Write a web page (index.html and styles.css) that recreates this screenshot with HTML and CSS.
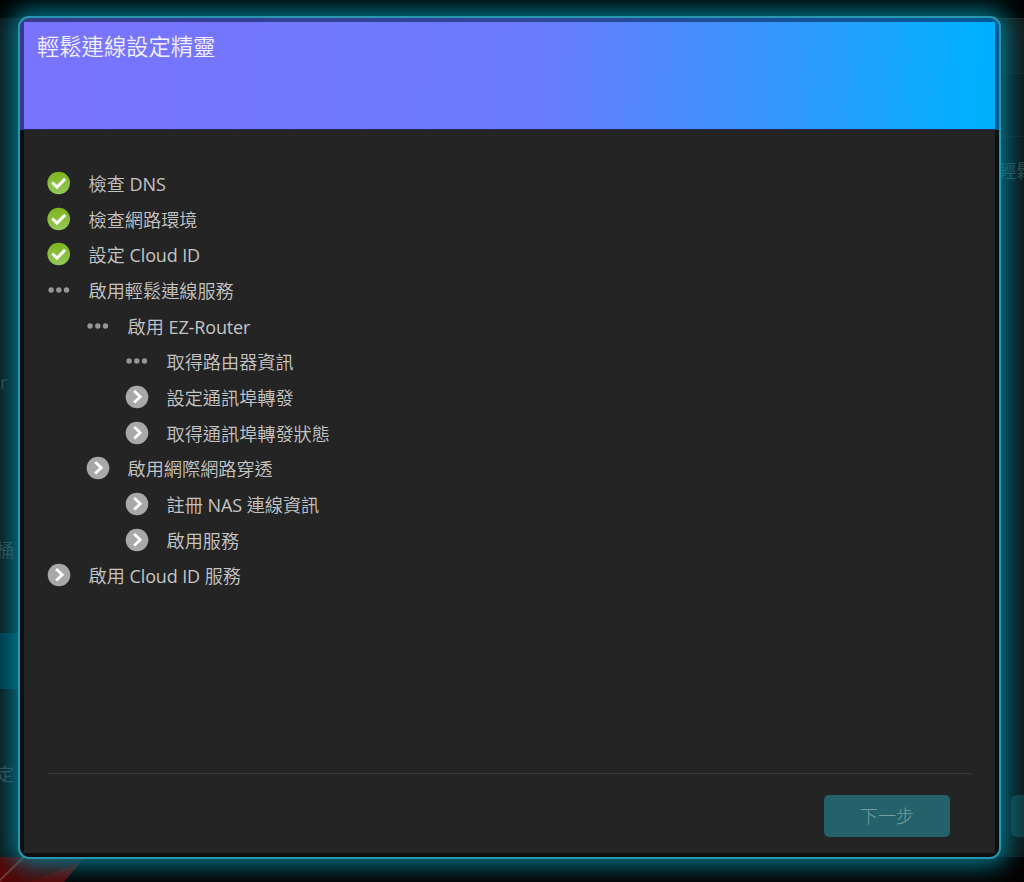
FILE: index.html
```
<!DOCTYPE html>
<html lang="zh-Hant">

<head>
   <meta charset="UTF-8">
   <meta name="viewport" content="width=device-width, initial-scale=1.0">
   <title>輕鬆連線設定精靈</title>
   <link rel="stylesheet" href="styles.css">
</head>

<body>
   <!-- icons -->
   <svg class="nodisplay">
      <linearGradient id="green" x1="0" y1="0" x2="0" y2="1">
         <stop offset="0" stop-color="#7fb31c"/>
         <stop offset="1" stop-color="#94c95c"/>
      </linearGradient>
      <symbol id="done" viewBox="0 0 24 24">
         <circle cx="11.7" cy="12" r="11.3" fill="url(#green)"/>
         <path d="M5.2 11.5l4.8 4.6 8.2-8.2" fill="none" stroke="#fff" stroke-width="2.9"/>
      </symbol>
      <symbol id="wait" viewBox="0 0 24 24">
         <circle cx="12" cy="12" r="11.3" fill="#a8a8a8"/>
         <path d="M9.2 6l6 5.8-6 5.8" fill="none" stroke="#fff" stroke-width="2.8"/>
      </symbol>
      <symbol id="busy" viewBox="0 0 24 24">
         <g fill="#969696">
            <circle cx="4.1" cy="12" r="2.7"/>
            <circle cx="11.8" cy="12" r="2.7"/>
            <circle cx="19.5" cy="12" r="2.7"/>
         </g>
      </symbol>
   </svg>

   <!-- page behind the dialog -->
   <div class="page">
      <div class="page-main flex">
         <div class="side column">
            <span class="side-router">r</span>
            <span class="side-trash">桶</span>
            <div class="side-active"></div>
            <span class="side-setting">定</span>
         </div>
         <div class="content column">
            <div class="content-head"></div>
            <div class="content-tabs"></div>
            <span class="content-text">輕鬆</span>
            <div class="content-btn"></div>
         </div>
      </div>
      <div class="page-bottom">
         <svg width="110" height="25" viewBox="0 0 110 25">
            <linearGradient id="red" x1="0" y1="0" x2="1" y2="0">
               <stop offset="0" stop-color="#560504"/>
               <stop offset="1" stop-color="#330807"/>
            </linearGradient>
            <path d="M0 0h88L68 16 58 25H0z" fill="url(#red)"/>
            <path d="M30 25L62 12 80 6 64 25z" fill="#5c0605"/>
            <path d="M-2 25L24 0" stroke="#6f3a34" stroke-width="2"/>
         </svg>
      </div>
   </div>

   <div class="dialog">
      <div class="panel flex column">
         <div class="header"><h1>輕鬆連線設定精靈</h1></div>
         <ul class="steps">
            <li><svg class="icon"><use href="#done"/></svg><p>檢查 <span>DNS</span></p></li>
            <li><svg class="icon"><use href="#done"/></svg><p>檢查網路環境</p></li>
            <li><svg class="icon"><use href="#done"/></svg><p>設定 <span>Cloud ID</span></p></li>
            <li><svg class="icon"><use href="#busy"/></svg><p>啟用輕鬆連線服務</p></li>
            <li class="level2"><svg class="icon"><use href="#busy"/></svg><p>啟用 <span>EZ-Router</span></p></li>
            <li class="level3"><svg class="icon"><use href="#busy"/></svg><p>取得路由器資訊</p></li>
            <li class="level3"><svg class="icon"><use href="#wait"/></svg><p>設定通訊埠轉發</p></li>
            <li class="level3"><svg class="icon"><use href="#wait"/></svg><p>取得通訊埠轉發狀態</p></li>
            <li class="level2"><svg class="icon"><use href="#wait"/></svg><p>啟用網際網路穿透</p></li>
            <li class="level3"><svg class="icon"><use href="#wait"/></svg><p>註冊 <span>NAS</span> 連線資訊</p></li>
            <li class="level3"><svg class="icon"><use href="#wait"/></svg><p>啟用服務</p></li>
            <li><svg class="icon"><use href="#wait"/></svg><p>啟用 <span>Cloud ID</span> 服務</p></li>
         </ul>
         <div class="footer">
            <button type="button" class="next" disabled>下一步</button>
         </div>
      </div>
   </div>
</body>

</html>
```

FILE: styles.css
```
* {
   padding: 0;
   margin: 0;
   box-sizing: border-box;
}
body {
   height: 882px;
   overflow: hidden;
   background-color: #000;
   color: #c4c4c4;
   font-family: "Open Sans", "Noto Sans CJK TC", sans-serif;
   font-size: 18.15px;
   font-weight: 350;
}
.flex { display: flex;}
.column {
   display: flex;
   flex-direction: column;
}
.nodisplay {
   position: absolute;
   width: 0;
   height: 0;
}

/** Page behind */
.page {
   padding-top: 18px;
   height: 882px;
   color: #35484b;
   line-height: 24px;
}
.page-main {
   height: 839px;
   justify-content: space-between;
   background-color: #0d1517;
}
.side {
   width: 60px;
   padding-top: 352px;
}
.side-router {
   font-weight: 400;
}
.side-trash {
   margin: 144px 0 0 -4px;
}
.side-active {
   height: 56px;
   margin-top: 71px;
   background-color: #013542;
}
.side-setting {
   margin: 73px 0 0 -4px;
}
.content {
   width: 34px;
}
.content-head {
   height: 55px;
   border-top: 1px solid #1b2526;
   background-color: #131919;
}
.content-tabs {
   height: 64px;
   border-top: 1px solid #182122;
   border-bottom: 1px solid #151e1f;
}
.content-text {
   margin: 22px 0 0 8px;
   white-space: nowrap;
}
.content-btn {
   height: 42px;
   margin: 612px 0 0 21px;
   border-radius: 6px 0 0 6px;
   background-color: #12363b;
}
.page-bottom {
   height: 25px;
   background-color: #050101;
}

/** Dialog */
.dialog {
   position: absolute;
   left: 18px;
   top: 16px;
   width: 983px;
   height: 843px;
   border: 2px solid #2996b0;
   border-radius: 11px;
   overflow: hidden;
   padding: 4px;
   background: linear-gradient(90deg, #37398a, #31469b 50%, #035992) 0 0 / 100% 112px no-repeat #0c1012;
   box-shadow: 0 0 24px 6px rgba(0, 136, 160, 0.9);
}
.panel {
   height: 831px;
   background-color: #242424;
}
.header {
   height: 108px;
   padding: 9px 13px;
   border-bottom: 1px solid #24265c;
   background: linear-gradient(92deg, #7a73ff, #6a7bff 53%, #2f99ff 80%, #00b0ff 98%);
}
h1 {
   color: #f4f2ff;
   font-size: 22.3px;
   font-weight: 350;
   line-height: 32px;
}
.steps {
   flex: 1;
   padding: 35px 23px 0;
   list-style: none;
}
.steps li {
   display: flex;
   align-items: center;
   height: 35.68px;
}
.steps p {
   padding-top: 2px;
   line-height: 24px;
}
.steps span {
   font-size: 18px;
   font-weight: 400;
   letter-spacing: -0.15px;
}
.steps .level2 { padding-left: 39px;}
.steps .level3 { padding-left: 78px;}
.icon {
   width: 24px;
   height: 24px;
   margin-right: 17.6px;
}
.footer {
   height: 80px;
   margin: 0 24px;
   padding: 21px 21px 0;
   border-top: 1px solid #383838;
   text-align: right;
}
.next {
   width: 126px;
   height: 42px;
   padding-bottom: 2px;
   border: none;
   border-radius: 5px;
   background-color: #23616b;
   color: #779ca2;
   font: inherit;
   font-weight: 300;
}
```
